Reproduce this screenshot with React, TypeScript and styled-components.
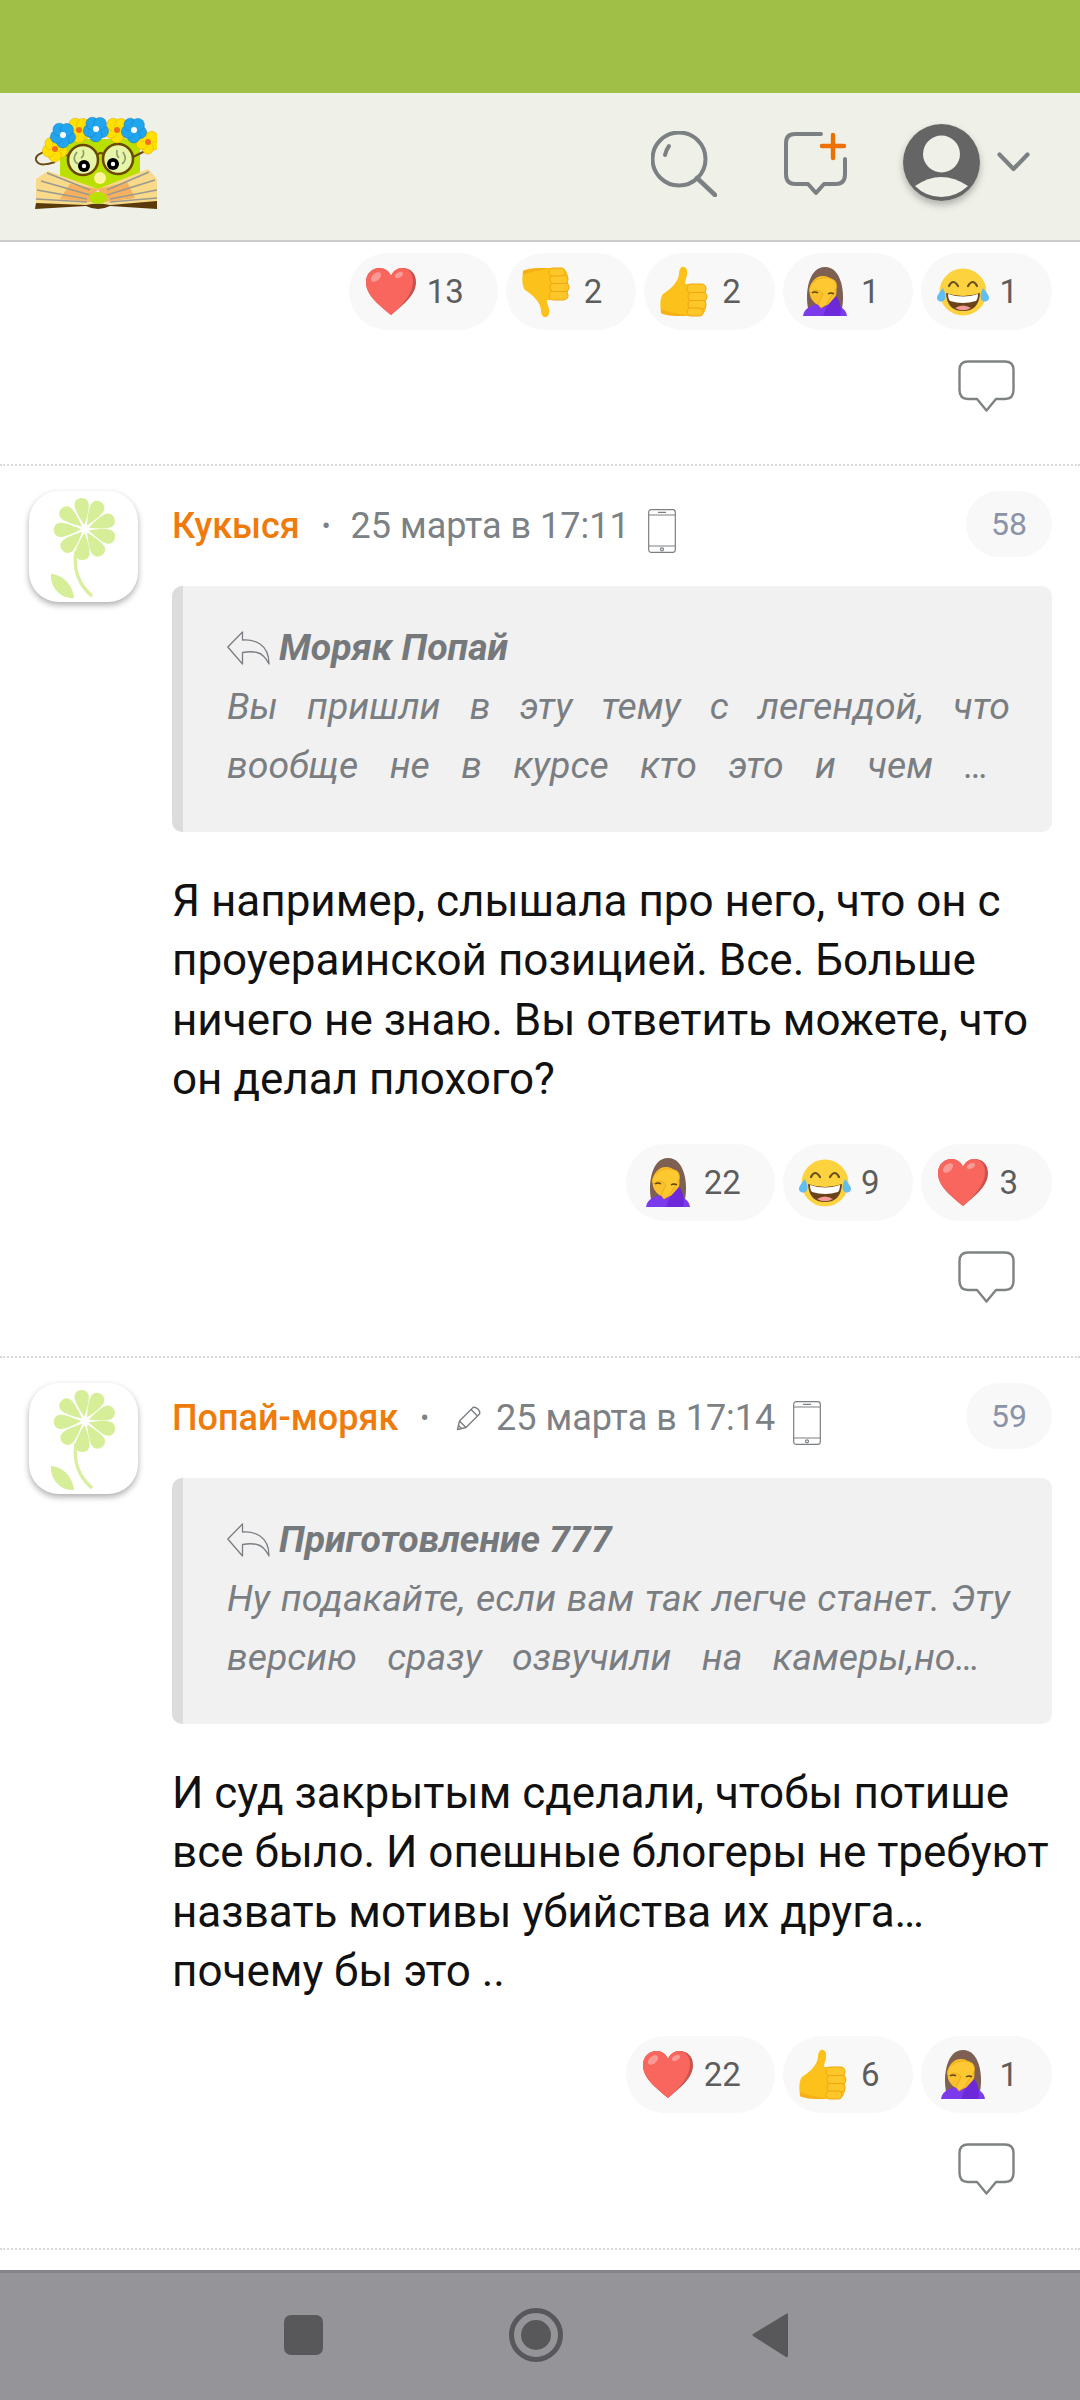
import React from "react";
import styled, { createGlobalStyle } from "styled-components";

const Global = createGlobalStyle`
  html, body { margin: 0; padding: 0; background: #fff; }
  body { font-family: Roboto, "Liberation Sans", sans-serif; }
  * { box-sizing: border-box; }
`;

const Screen = styled.div`
  width: 1080px;
  height: 2400px;
  display: flex;
  flex-direction: column;
  overflow: hidden;
  background: #fff;
`;
const StatusBar = styled.div`
  height: 93px;
  flex: none;
  background: #9fbf46;
`;
const Header = styled.header`
  height: 149px;
  flex: none;
  display: flex;
  align-items: center;
  background: #eff0e8;
  border-bottom: 2px solid #cccccc;
  padding: 0 50px 0 35px;
`;
const LogoBox = styled.div`
  width: 122px;
  height: 95px;
  margin-top: -10px;
  margin-right: auto;
`;
const HeadBtn = styled.div<{ $gap: number; $lift?: number }>`
  display: flex;
  margin-left: ${(p) => p.$gap}px;
  margin-top: ${(p) => p.$lift ?? 0}px;
`;
const UserPic = styled.div`
  width: 77px;
  height: 77px;
  border-radius: 50%;
  box-shadow: 0 4px 7px rgba(60, 60, 60, 0.35);
  display: flex;
`;
const Main = styled.main`
  flex: 1;
  min-height: 0;
  overflow: hidden;
  padding-top: 11px;
`;
const Comment = styled.article`
  border-top: 2px dotted #d8d8d8;
  padding: 25px 28px 53px 29px;
  display: grid;
  grid-template-columns: 109px 1fr;
  column-gap: 34px;
`;
const Tail = styled.div`
  padding: 0 28px 52px 172px;
`;
const Avatar = styled.div`
  width: 109px;
  height: 111px;
  border-radius: 30px;
  background: #fff;
  box-shadow: 0 3px 6px rgba(0, 0, 0, 0.32);
  display: flex;
`;
const Body = styled.div`
  min-width: 0;
`;
const MetaRow = styled.div`
  height: 66px;
  padding-top: 4px;
  display: flex;
  align-items: center;
`;
const Name = styled.span`
  font-size: 36px;
  font-weight: 500;
  color: #ee7b0b;
`;
const Dot = styled.span`
  font-size: 26px;
  color: #7c8185;
  margin: 0 20px 0 22px;
`;
const Time = styled.span`
  font-size: 36px;
  color: #7c8185;
`;
const Glyph = styled.span<{ $left?: number; $right?: number; $top?: number }>`
  display: inline-flex;
  margin-left: ${(p) => p.$left ?? 0}px;
  margin-right: ${(p) => p.$right ?? 0}px;
  margin-top: ${(p) => p.$top ?? 0}px;
`;
const NumberTag = styled.span`
  margin-left: auto;
  margin-top: -4px;
  align-self: flex-start;
  width: 86px;
  height: 66px;
  border-radius: 33px;
  background: #f8f8f9;
  color: #8a93a8;
  font-size: 32px;
  display: flex;
  align-items: center;
  justify-content: center;
`;
const Quote = styled.blockquote`
  margin: 29px 0 0;
  background: #f1f1f1;
  border-left: 11px solid #dcdcdc;
  border-radius: 10px;
  padding: 32px 42px 37px 44px;
  font-style: italic;
  color: #7a7e82;
  font-size: 37.4px;
  line-height: 59px;
`;
const QuoteTitle = styled.div`
  display: flex;
  align-items: center;
  font-weight: 700;
  color: #75797c;
`;
const QuoteLine = styled.div<{ $end?: number }>`
  text-align: justify;
  text-align-last: justify;
  white-space: nowrap;
  padding-right: ${(p) => p.$end ?? 0}px;
`;
const Text = styled.div`
  margin-top: 40px;
  font-size: 44px;
  line-height: 59.3px;
  color: #111;
`;
const TextLine = styled.div`
  white-space: nowrap;
`;
const Reactions = styled.div<{ $flush?: boolean }>`
  margin-top: ${(p) => (p.$flush ? 0 : 35)}px;
  display: flex;
  justify-content: flex-end;
  gap: 8px;
`;
const Pill = styled.div`
  height: 77px;
  border-radius: 39px;
  background: #f8f8f8;
  padding: 0 34px 0 16px;
  display: flex;
  align-items: center;
  gap: 10px;
  color: #5d5d5d;
  font-size: 33px;
`;
const ReplyRow = styled.div`
  margin-top: 30px;
  display: flex;
  justify-content: flex-end;
  padding-right: 37px;
`;
const NavBar = styled.nav`
  height: 130px;
  flex: none;
  background: #959499;
  border-top: 3px solid #85848a;
  display: flex;
  align-items: center;
  padding: 0 0 3px 284px;
`;
const NavSquare = styled.div`
  width: 39px;
  height: 40px;
  border-radius: 7px;
  background: #58585a;
`;
const NavRing = styled.div`
  width: 54px;
  height: 54px;
  margin-left: 186px;
  border-radius: 50%;
  border: 5px solid #58585a;
  display: flex;
  align-items: center;
  justify-content: center;
  &::after {
    content: "";
    width: 30px;
    height: 30px;
    border-radius: 50%;
    background: #58585a;
  }
`;
const NavBack = styled.div`
  margin-left: 188px;
  display: flex;
`;

const Logo = () => {
  const flower = (x: number, y: number, c: string, d: string, m: string, r = 6.4) => (
    <g key={`${x}-${y}`}>
      {[0, 72, 144, 216, 288].map((a) => (
        <circle
          key={a}
          cx={x + Math.cos(((a + 20) * Math.PI) / 180) * 6.5}
          cy={y + Math.sin(((a + 20) * Math.PI) / 180) * 6.5}
          r={r}
          fill={c}
          stroke={d}
          strokeWidth={0.5}
        />
      ))}
      <circle cx={x} cy={y} r={4.5} fill={c} />
      <circle cx={x} cy={y} r={3} fill={m} />
    </g>
  );
  return (
    <svg width="122" height="95" viewBox="0 0 122 95">
      <path d="M25 25H105V72L63 75L25 72Z" fill="#b9e000" />
      <path d="M33 42C20 33 -1 38 1 46C3 53 14 50 20 48" fill="none" stroke="#6b4a10" strokeWidth="2" />
      <path d="M96 44L112 36" stroke="#6b4a10" strokeWidth="2" />
      <circle cx="48" cy="46" r="15" fill="#e6f5a8" stroke="#6b4a00" strokeWidth="2.6" />
      <circle cx="83" cy="45" r="15" fill="#e6f5a8" stroke="#6b4a00" strokeWidth="2.6" />
      <path d="M62 41Q66 37 69 41" fill="none" stroke="#6b4a00" strokeWidth="2.2" />
      <path d="M42 38Q36 46 43 50M48 36Q50 41 46 44" fill="none" stroke="#8d9a70" strokeWidth="1.6" />
      <path d="M88 38Q93 46 87 50M82 36Q81 41 84 44" fill="none" stroke="#8d9a70" strokeWidth="1.6" />
      <circle cx="49" cy="52" r="6" fill="#000" />
      <circle cx="49" cy="52" r="2.2" fill="#fff" />
      <circle cx="78" cy="50" r="6" fill="#000" />
      <circle cx="78" cy="50" r="2.2" fill="#fff" />
      <circle cx="65" cy="64" r="6" fill="#fff3a0" />
      {flower(20, 35, "#ffe000", "#d9a800", "#f2701c")}
      {flower(113, 28, "#ffe000", "#d9a800", "#f2701c", 5.6)}
      {flower(44, 16, "#ffe000", "#d9a800", "#f2701c")}
      {flower(82, 16, "#ffe000", "#d9a800", "#f2701c")}
      {flower(28, 21, "#22a5ef", "#1778b8", "#fff")}
      {flower(61, 15, "#22a5ef", "#1778b8", "#fff")}
      {flower(99, 16, "#22a5ef", "#1778b8", "#fff")}
      <path d="M13 57L63 75L59 91L1 91L1 65Z" fill="#f9d98a" />
      <path d="M113 55L63 75L68 91L122 88L122 65Z" fill="#f9d98a" />
      <path d="M35 70L63 75L55 88L25 85Z" fill="#f5a24d" opacity="0.75" />
      <path d="M92 68L63 75L70 88L100 84Z" fill="#f5a24d" opacity="0.75" />
      <path
        d="M12 59L55 76M6 67L55 81M2 76L52 85M1 85L52 88M114 58L72 76M120 66L72 81M122 76L75 85M122 84L75 88"
        stroke="#9a9a90"
        strokeWidth="1.6"
        fill="none"
      />
      <path d="M0 95L1 89L51 91Q63 88 75 91L122 87V95L75 92Q63 98 51 92Z" fill="#5a3a08" />
      <ellipse cx="63" cy="84" rx="9" ry="6" fill="#b9e000" />
    </svg>
  );
};

const SearchIcon = () => (
  <svg width="66" height="66" viewBox="0 0 66 66" fill="none" stroke="#7b8183" strokeLinecap="round">
    <circle cx="28" cy="28" r="26.5" strokeWidth="4" />
    <path d="M46 47L64 64" strokeWidth="4.5" />
    <path d="M14 24Q15 19 18 15" strokeWidth="4" />
  </svg>
);
const NewChatIcon = () => (
  <svg width="64" height="64" viewBox="0 0 64 64" fill="none" strokeLinecap="round">
    <path
      d="M37 2H11Q2 2 2 11V42Q2 52 11 52H24L32 61L40 52H52Q61 52 61 42V27"
      stroke="#7b8183"
      strokeWidth="4"
      strokeLinejoin="round"
    />
    <path d="M38 14H60M49 3V26" stroke="#ed7100" strokeWidth="4.4" />
  </svg>
);
const UserIcon = () => (
  <svg width="77" height="77" viewBox="0 0 77 77">
    <circle cx="38.5" cy="38.5" r="38.5" fill="#656565" />
    <circle cx="38.5" cy="30" r="18.5" fill="#eff0e8" />
    <path d="M12 62Q38 44 65 62Q53 73 38.5 73Q23 73 12 62Z" fill="#eff0e8" />
  </svg>
);
const Chevron = () => (
  <svg width="33" height="20" viewBox="0 0 33 20" fill="none" stroke="#7b8183" strokeWidth="4.2" strokeLinecap="round" strokeLinejoin="round">
    <path d="M2.5 2.5L16.5 17L30.5 2.5" />
  </svg>
);
const ReplyBubble = () => (
  <svg width="57" height="52" viewBox="0 0 57 52" fill="none" stroke="#7f8283" strokeWidth="2.4" strokeLinejoin="round">
    <path d="M10 1.5H47Q55.5 1.5 55.5 10V30Q55.5 39 47 39H38L28.5 50.5L19 39H10Q1.5 39 1.5 30V10Q1.5 1.5 10 1.5Z" />
  </svg>
);
const Phone = () => (
  <svg width="28" height="44" viewBox="0 0 28 44" fill="none" stroke="#7c7f82" strokeWidth="1.2">
    <rect x="0.7" y="0.7" width="26.6" height="42.6" rx="2.5" />
    <path d="M1 6H27M1 37H27M10 3.3H18" />
    <circle cx="14" cy="40.3" r="1.5" />
  </svg>
);
const Pencil = () => (
  <svg width="25" height="25" viewBox="0 0 25 25" fill="none" stroke="#7c7f82" strokeWidth="1.4" strokeLinejoin="round">
    <path d="M1.5 23.5L3.5 15L17 1.5Q19 0.5 22 3Q24.5 6 23.5 8L10 21.5Z" />
    <path d="M3.5 15L10 21.5M15 3.5L21.5 10M2.5 19.5L5.5 22.5" />
  </svg>
);
const ReplyArrow = () => (
  <svg width="43" height="34" viewBox="0 0 43 34" fill="none" stroke="#7a7e82" strokeWidth="1.3" strokeLinejoin="round">
    <path d="M0.8 16L15.5 1V9Q25 8 33 13Q42 19 42 33Q37 23 30 21.5Q24 20 15.5 21.5V33Z" />
  </svg>
);

type Kind = "heart" | "down" | "up" | "palm" | "joy";

const HeartEmoji = () => (
  <svg width="52" height="52" viewBox="0 0 52 52">
    <path d="M26 49C13 38 1 29 1 16C1 7 8 2 14 2C20 2 24 5 26 10C28 5 32 2 38 2C45 2 51 7 51 16C51 29 39 38 26 49Z" fill="#c9514e" />
    <path d="M26 49C13 38 1 29 1 16C1 7 8 2 14 2C20 2 24 5 26 10C28 5 32 2 37 2C43 2 48 7 48 15C48 28 38 38 26 49Z" fill="#f8665e" />
    <ellipse cx="11" cy="11" rx="6" ry="3.6" transform="rotate(-42 11 11)" fill="#f99a94" />
    <ellipse cx="34" cy="9" rx="4.4" ry="2.6" transform="rotate(-30 34 9)" fill="#f99a94" />
  </svg>
);
const Hand = () => (
  <g>
    <path
      d="M22 1C26 0 28 4 27 9C26 13 25 15 25 18H38C44 18 46 22 46 28V40C46 46 43 50 37 50H20C12 50 4 49 1 47C0 38 0 32 3 28C12 22 18 16 19 8C19 4 20 2 22 1Z"
      fill="#fcc21b"
    />
    <path d="M1 47C4 49 12 50 20 50H27C20 47 8 47 1 43Z" fill="#f3a712" opacity="0.7" />
    <g fill="#fdc72a" stroke="#f1a80f" strokeWidth="1.1">
      <rect x="27" y="18" width="19" height="9" rx="4.5" />
      <rect x="28" y="26.5" width="19" height="8.5" rx="4.2" />
      <rect x="28" y="34.5" width="18" height="8.5" rx="4.2" />
      <rect x="27" y="42" width="16" height="8" rx="4" />
    </g>
  </g>
);
const UpEmoji = () => (
  <svg width="52" height="52" viewBox="0 0 52 52">
    <Hand />
  </svg>
);
const DownEmoji = () => (
  <svg width="52" height="52" viewBox="0 0 52 52">
    <g transform="translate(0 52) scale(1 -1)">
      <Hand />
    </g>
  </svg>
);
const PalmEmoji = () => (
  <svg width="52" height="52" viewBox="0 0 52 52">
    <path d="M9 42C6 28 9 1 26 1C43 1 46 28 43 42Z" fill="#7d6052" />
    <path d="M4 50C5 43 11 39 20 38H32C41 39 47 43 48 50Z" fill="#7c3aed" />
    <ellipse cx="24" cy="25" rx="13.5" ry="15" fill="#fbc02d" />
    <path d="M11 21C14 13 26 9 35 14C39 18 38 24 34 27L27 39L22 42L19 38L24 28C20 23 15 23 12 27C10 26 10 23 11 21Z" fill="#fdc832" stroke="#eda60f" strokeWidth="0.8" />
    <path d="M13 27Q16 25 19 27" stroke="#5c4315" strokeWidth="1.4" fill="none" />
    <path d="M29 28Q32 26 35 28" stroke="#5c4315" strokeWidth="1.4" fill="none" />
    <path d="M24 50L28 40L37 30C41 34 43 43 41 50Z" fill="#6d28d9" />
  </svg>
);
const JoyEmoji = () => (
  <svg width="52" height="52" viewBox="0 0 52 52">
    <circle cx="26" cy="26" r="23.5" fill="#fcd23f" />
    <path d="M12 20Q16 12 21 20M31 20Q36 12 40 20" fill="none" stroke="#6b4f1d" strokeWidth="2.2" strokeLinecap="round" />
    <path d="M9 27Q26 33 43 27Q42 45 26 45Q10 45 9 27Z" fill="#6b4318" />
    <path d="M11 28Q26 33 41 28Q41 33 39 35Q26 39 13 35Q11 33 11 28Z" fill="#fff" />
    <path d="M18 42Q26 37 34 42Q26 46.5 18 42Z" fill="#f49a9a" />
    <path d="M6 22C3 26 0 29 0 32C0 36 6 37 8 33C9 30 8 26 6 22Z" fill="#62bdf2" />
    <path d="M46 22C49 26 52 29 52 32C52 36 46 37 44 33C43 30 44 26 46 22Z" fill="#62bdf2" />
  </svg>
);
const emoji: Record<Kind, React.ComponentType> = {
  heart: HeartEmoji,
  down: DownEmoji,
  up: UpEmoji,
  palm: PalmEmoji,
  joy: JoyEmoji,
};

const Flower = () => (
  <svg width="109" height="111" viewBox="0 0 109 111">
    <path d="M47 60C44 78 50 94 63 105" fill="none" stroke="#d9ef9e" strokeWidth="3.4" />
    <path d="M22 83C36 84 44 96 45 107C32 108 21 97 22 83Z" fill="#d6ee98" />
    {[-8, 30, 70, 108, 148, 186, 226, 268, 310].map((a) => (
      <path
        key={a}
        d="M56 34C52.5 27 48 17 49 12C50.5 5 61.5 5 63 12C64 17 59.5 27 56 34Z"
        fill="#d6ee98"
        transform={`rotate(${a} 56 38)`}
      />
    ))}
  </svg>
);

const ReactionRow = ({ items, flush }: { items: [Kind, number][]; flush?: boolean }) => (
  <Reactions $flush={flush}>
    {items.map(([k, n]) => {
      const E = emoji[k];
      return (
        <Pill key={k}>
          <E />
          <span>{n}</span>
        </Pill>
      );
    })}
  </Reactions>
);

type Data = {
  name: string;
  time: string;
  edited?: boolean;
  num: number;
  quoteBy: string;
  quote: string[];
  quoteEnd: number;
  text: string[];
  reactions: [Kind, number][];
};

const comments: Data[] = [
  {
    name: "Кукыся",
    time: "25 марта в 17:11",
    num: 58,
    quoteBy: "Моряк Попай",
    quote: ["Вы пришли в эту тему с легендой, что", "вообще не в курсе кто это и чем …"],
    quoteEnd: 21,
    text: [
      "Я например, слышала про него, что он с",
      "проуераинской позицией. Все. Больше",
      "ничего не знаю. Вы ответить можете, что",
      "он делал плохого?",
    ],
    reactions: [["palm", 22], ["joy", 9], ["heart", 3]],
  },
  {
    name: "Попай-моряк",
    time: "25 марта в 17:14",
    edited: true,
    num: 59,
    quoteBy: "Приготовление 777",
    quote: ["Ну подакайте, если вам так легче станет. Эту", "версию сразу озвучили на камеры,но…"],
    quoteEnd: 30,
    text: [
      "И суд закрытым сделали, чтобы потише",
      "все было. И опешные блогеры не требуют",
      "назвать мотивы убийства их друга…",
      "почему бы это ..",
    ],
    reactions: [["heart", 22], ["up", 6], ["palm", 1]],
  },
];

export default function App() {
  return (
    <Screen>
      <Global />
      <StatusBar />
      <Header>
        <LogoBox>
          <Logo />
        </LogoBox>
        <HeadBtn $gap={0} $lift={-6}>
          <SearchIcon />
        </HeadBtn>
        <HeadBtn $gap={67} $lift={-6}>
          <NewChatIcon />
        </HeadBtn>
        <HeadBtn $gap={55} $lift={-8}>
          <UserPic>
            <UserIcon />
          </UserPic>
        </HeadBtn>
        <HeadBtn $gap={17} $lift={-9}>
          <Chevron />
        </HeadBtn>
      </Header>
      <Main>
        <Tail>
          <ReactionRow
            flush
            items={[
              ["heart", 13],
              ["down", 2],
              ["up", 2],
              ["palm", 1],
              ["joy", 1],
            ]}
          />
          <ReplyRow>
            <ReplyBubble />
          </ReplyRow>
        </Tail>
        {comments.map((c) => (
          <Comment key={c.num}>
            <Avatar>
              <Flower />
            </Avatar>
            <Body>
              <MetaRow>
                <Name>{c.name}</Name>
                <Dot>•</Dot>
                {c.edited && (
                  <Glyph $left={7} $right={15}>
                    <Pencil />
                  </Glyph>
                )}
                <Time>{c.time}</Time>
                <Glyph $left={18} $top={10}>
                  <Phone />
                </Glyph>
                <NumberTag>{c.num}</NumberTag>
              </MetaRow>
              <Quote>
                <QuoteTitle>
                  <Glyph $right={9}>
                    <ReplyArrow />
                  </Glyph>
                  {c.quoteBy}
                </QuoteTitle>
                {c.quote.map((l, i) => (
                  <QuoteLine key={l} $end={i === 1 ? c.quoteEnd : 0}>
                    {l}
                  </QuoteLine>
                ))}
              </Quote>
              <Text>
                {c.text.map((l) => (
                  <TextLine key={l}>{l}</TextLine>
                ))}
              </Text>
              <ReactionRow items={c.reactions} />
              <ReplyRow>
                <ReplyBubble />
              </ReplyRow>
            </Body>
          </Comment>
        ))}
        <Comment />
      </Main>
      <NavBar>
        <NavSquare />
        <NavRing />
        <NavBack>
          <svg width="38" height="46" viewBox="0 0 38 46">
            <path d="M35 2L2 22Q1 23 2 24L35 45Q37 46 37 43V3Q37 0 35 2Z" fill="#58585a" />
          </svg>
        </NavBack>
      </NavBar>
    </Screen>
  );
}
